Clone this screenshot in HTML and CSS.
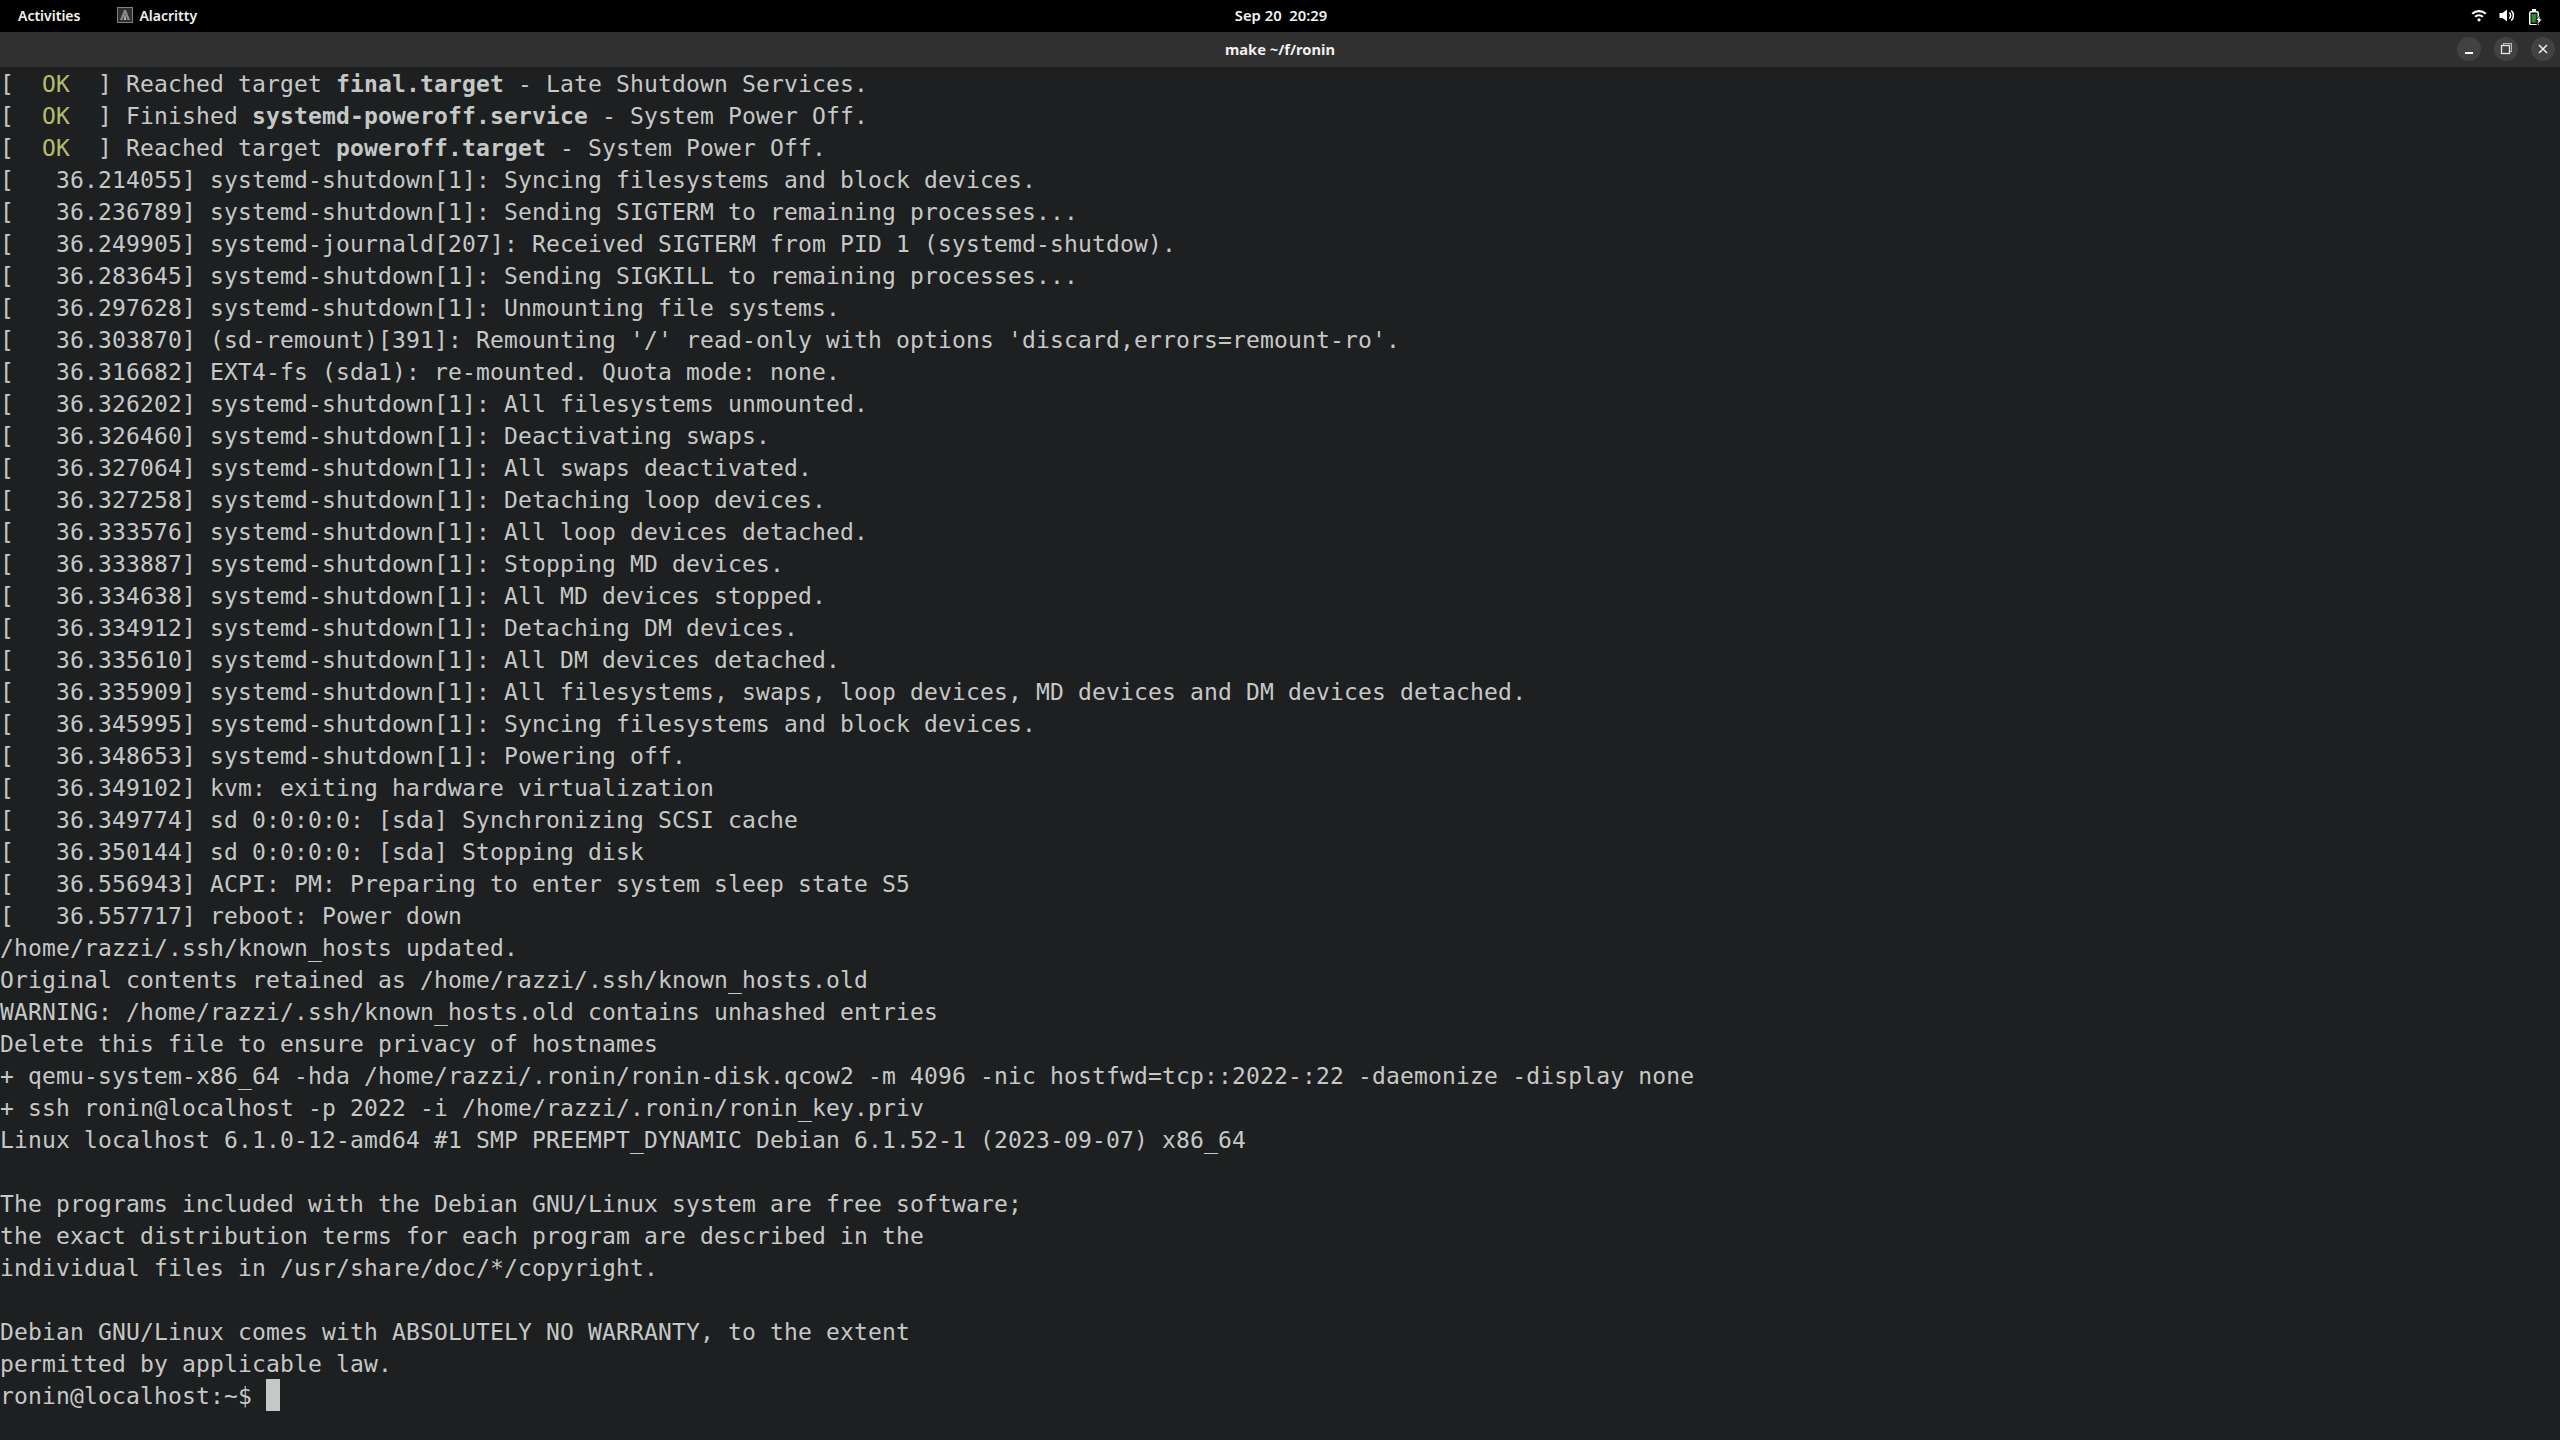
FILE: index.html
```html
<!DOCTYPE html>
<html lang="en">
<head>
<meta charset="utf-8">
<title>Alacritty</title>
<link rel="stylesheet" href="styles.css">
</head>
<body>
<header class="topbar">
  <div class="top-left">
    <span class="top-item">Activities</span>
    <span class="top-app">
      <svg class="app-icon" width="16" height="16" viewBox="0 0 16 16"><rect x="0.5" y="0.5" width="15" height="15" fill="#2f2f2f" stroke="#808080"/><path d="M7 3h2l4 10h-2.5L8 6.5 5.5 13H3z" fill="#8a8a8a"/><path d="M7.6 8h.8l.8 5H6.800z" fill="#bbb"/></svg>
      <span class="top-item">Alacritty</span>
    </span>
  </div>
  <div class="top-clock">Sep 20&nbsp; 20:29</div>
  <div class="top-right">
    <svg width="16" height="16" viewBox="0 0 16 16"><path d="M0.5 6A11 11 0 0 1 15.500 6L14 7.600A9 9 0 0 0 2 7.600z" fill="#fff"/><path d="M3.400 9A7 7 0 0 1 12.600 9L11.100 10.500A5 5 0 0 0 4.900 10.500z" fill="#fff"/><circle cx="8" cy="12.800" r="1.600" fill="#fff"/></svg>
    <svg width="16" height="16" viewBox="0 0 16 16"><path d="M0.500 6h3L8 2.500v12L3.500 11h-3z" fill="#fff"/><path d="M10.300 5.500a4 4 0 0 1 0 6" fill="none" stroke="#fff" stroke-width="1.500"/><path d="M12.300 3.500a7 7 0 0 1 0 10" fill="none" stroke="#fff" stroke-width="1.500"/></svg>
    <svg width="17" height="20" viewBox="0 0 17 20"><rect x="2.750" y="6.750" width="8.500" height="13" rx="1.500" fill="none" stroke="#fff" stroke-width="1.500"/><rect x="5" y="4" width="4" height="2.500" fill="#fff"/><rect x="4.500" y="9" width="5" height="8.500" fill="#2e8b2e"/><path d="M13 10.500l-4.500 5h2.500l-1 4.500 5.500-6h-2.500z" fill="#fff" stroke="#000" stroke-width="0.800"/></svg>
  </div>
</header>
<div class="titlebar">
  <div class="title">make ~/f/ronin</div>
  <div class="win-buttons">
    <span class="win-btn"><svg width="16" height="16" viewBox="0 0 16 16"><rect x="4" y="11" width="8" height="2" fill="#fff"/></svg></span>
    <span class="win-btn"><svg width="16" height="16" viewBox="0 0 16 16"><rect x="5.500" y="2.500" width="8" height="8" fill="none" stroke="#bbb"/><rect x="3.500" y="4.500" width="8" height="8" fill="#424242" stroke="#e6e6e6" stroke-width="1.300"/></svg></span>
    <span class="win-btn"><svg width="16" height="16" viewBox="0 0 16 16"><path d="M4 4l8 8M12 4l-8 8" stroke="#eee" stroke-width="1.500"/></svg></span>
  </div>
</div>
<main class="term">
<div class="ln">[  <span class="ok">OK</span>  ] Reached target <b>final.target</b> - Late Shutdown Services.</div>
<div class="ln">[  <span class="ok">OK</span>  ] Finished <b>systemd-poweroff.service</b> - System Power Off.</div>
<div class="ln">[  <span class="ok">OK</span>  ] Reached target <b>poweroff.target</b> - System Power Off.</div>
<div class="ln">[   36.214055] systemd-shutdown[1]: Syncing filesystems and block devices.</div>
<div class="ln">[   36.236789] systemd-shutdown[1]: Sending SIGTERM to remaining processes...</div>
<div class="ln">[   36.249905] systemd-journald[207]: Received SIGTERM from PID 1 (systemd-shutdow).</div>
<div class="ln">[   36.283645] systemd-shutdown[1]: Sending SIGKILL to remaining processes...</div>
<div class="ln">[   36.297628] systemd-shutdown[1]: Unmounting file systems.</div>
<div class="ln">[   36.303870] (sd-remount)[391]: Remounting '/' read-only with options 'discard,errors=remount-ro'.</div>
<div class="ln">[   36.316682] EXT4-fs (sda1): re-mounted. Quota mode: none.</div>
<div class="ln">[   36.326202] systemd-shutdown[1]: All filesystems unmounted.</div>
<div class="ln">[   36.326460] systemd-shutdown[1]: Deactivating swaps.</div>
<div class="ln">[   36.327064] systemd-shutdown[1]: All swaps deactivated.</div>
<div class="ln">[   36.327258] systemd-shutdown[1]: Detaching loop devices.</div>
<div class="ln">[   36.333576] systemd-shutdown[1]: All loop devices detached.</div>
<div class="ln">[   36.333887] systemd-shutdown[1]: Stopping MD devices.</div>
<div class="ln">[   36.334638] systemd-shutdown[1]: All MD devices stopped.</div>
<div class="ln">[   36.334912] systemd-shutdown[1]: Detaching DM devices.</div>
<div class="ln">[   36.335610] systemd-shutdown[1]: All DM devices detached.</div>
<div class="ln">[   36.335909] systemd-shutdown[1]: All filesystems, swaps, loop devices, MD devices and DM devices detached.</div>
<div class="ln">[   36.345995] systemd-shutdown[1]: Syncing filesystems and block devices.</div>
<div class="ln">[   36.348653] systemd-shutdown[1]: Powering off.</div>
<div class="ln">[   36.349102] kvm: exiting hardware virtualization</div>
<div class="ln">[   36.349774] sd 0:0:0:0: [sda] Synchronizing SCSI cache</div>
<div class="ln">[   36.350144] sd 0:0:0:0: [sda] Stopping disk</div>
<div class="ln">[   36.556943] ACPI: PM: Preparing to enter system sleep state S5</div>
<div class="ln">[   36.557717] reboot: Power down</div>
<div class="ln">/home/razzi/.ssh/known_hosts updated.</div>
<div class="ln">Original contents retained as /home/razzi/.ssh/known_hosts.old</div>
<div class="ln">WARNING: /home/razzi/.ssh/known_hosts.old contains unhashed entries</div>
<div class="ln">Delete this file to ensure privacy of hostnames</div>
<div class="ln">+ qemu-system-x86_64 -hda /home/razzi/.ronin/ronin-disk.qcow2 -m 4096 -nic hostfwd=tcp::2022-:22 -daemonize -display none</div>
<div class="ln">+ ssh ronin@localhost -p 2022 -i /home/razzi/.ronin/ronin_key.priv</div>
<div class="ln">Linux localhost 6.1.0-12-amd64 #1 SMP PREEMPT_DYNAMIC Debian 6.1.52-1 (2023-09-07) x86_64</div>
<div class="ln"></div>
<div class="ln">The programs included with the Debian GNU/Linux system are free software;</div>
<div class="ln">the exact distribution terms for each program are described in the</div>
<div class="ln">individual files in /usr/share/doc/*/copyright.</div>
<div class="ln"></div>
<div class="ln">Debian GNU/Linux comes with ABSOLUTELY NO WARRANTY, to the extent</div>
<div class="ln">permitted by applicable law.</div>
<div class="ln prompt">ronin@localhost:~$ <span class="cursor"></span></div>
</main>
</body>
</html>
```
FILE: styles.css
```css
* { box-sizing: border-box; }
html, body { margin: 0; padding: 0; height: 100%; }
body {
  width: 2560px;
  height: 1440px;
  overflow: hidden;
  display: flex;
  flex-direction: column;
  background: #1d1f21;
}
.topbar {
  height: 32px;
  flex: none;
  background: #000;
  color: #f2f2f2;
  font-family: "Noto Sans", sans-serif;
  font-size: 14px;
  font-weight: 600;
  display: grid;
  grid-template-columns: 1fr auto 1fr;
  align-items: center;
  padding: 0 16px 2px 18px;
}
.top-left { display: flex; align-items: center; gap: 37px; }
.top-app { display: flex; align-items: center; gap: 6px; }
.app-icon { display: block; }
.top-clock { text-align: center; font-size: 14.8px; }
.top-right { display: flex; justify-content: flex-end; align-items: center; gap: 12px; }
.top-right svg { display: block; }
.titlebar {
  height: 35px;
  flex: none;
  background: #303030;
  color: #f0f0f0;
  font-family: "Noto Sans", sans-serif;
  font-size: 14.7px;
  font-weight: 700;
  display: flex;
  align-items: center;
  justify-content: center;
  padding-bottom: 1px;
  position: relative;
}
.win-buttons {
  position: absolute;
  right: 5px;
  top: 5px;
  display: flex;
  gap: 13px;
}
.win-btn {
  width: 24px;
  height: 24px;
  border-radius: 50%;
  background: #424242;
  display: flex;
  align-items: center;
  justify-content: center;
}
.term {
  flex: 1;
  color: #c5c8c6;
  font-family: "DejaVu Sans Mono", monospace;
  font-size: 23px;
  letter-spacing: 0.154px;
  line-height: 32px;
}
.ln { height: 32px; padding-top: 1px; white-space: pre; }
.ln b { font-weight: 700; }
.ok { color: #b5bd68; }
.prompt { display: flex; white-space: pre; }
.cursor { display: block; width: 14px; height: 32px; margin-top: -1px; background: #c5c8c6; }
```
